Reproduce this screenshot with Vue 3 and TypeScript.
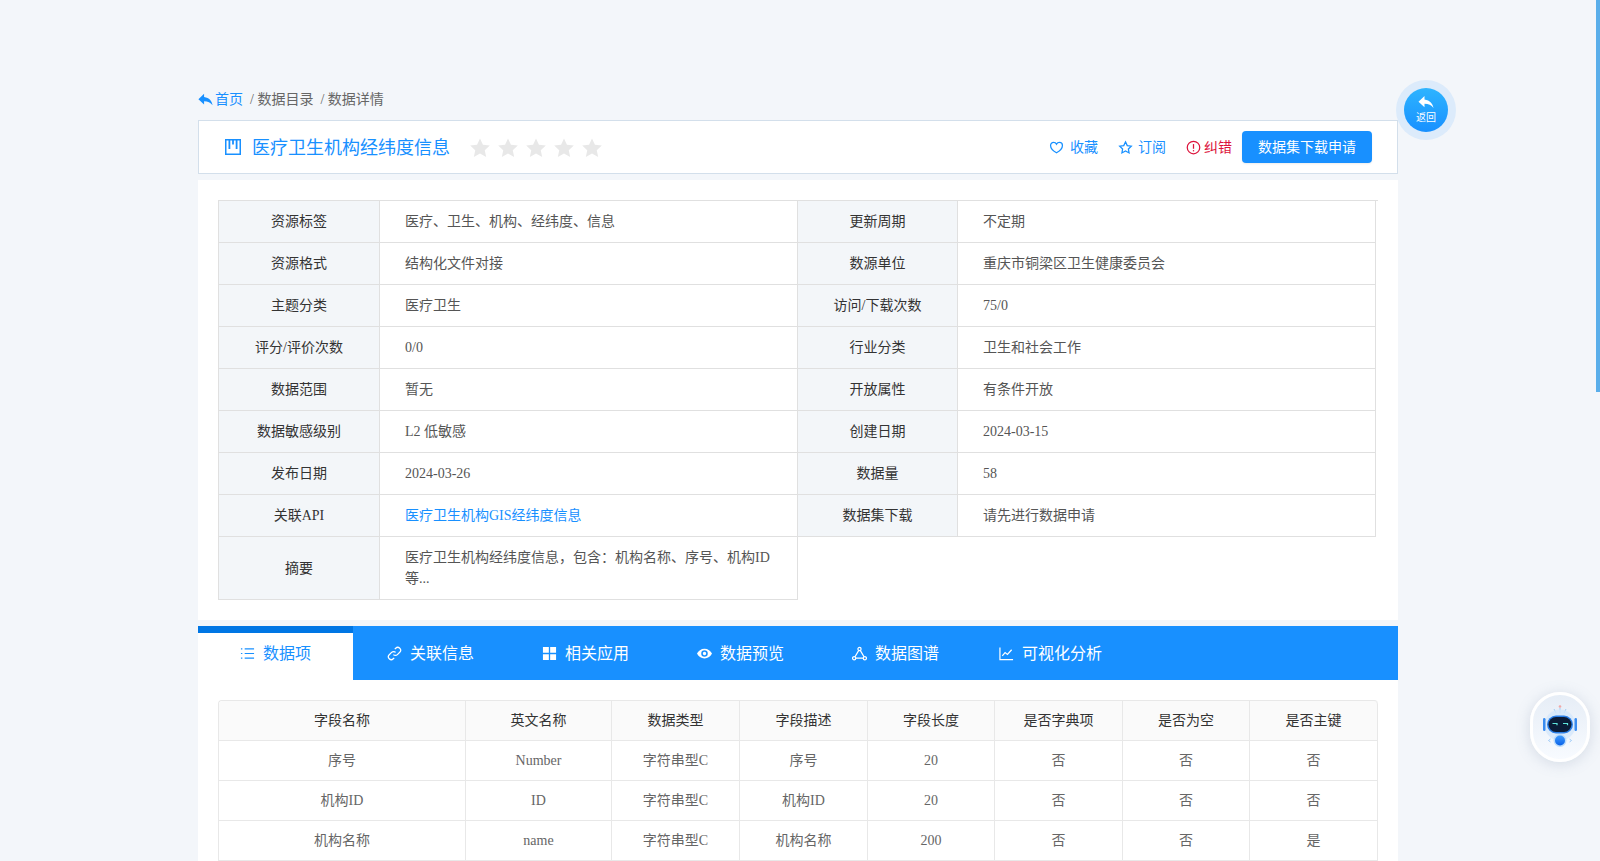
<template>
  <div class="page">
    <div class="container">
      <div class="crumbs">
        <svg class="crumb-icon" viewBox="0 0 24 24"><path d="M10 8.500V4L2 11.500 10 19v-4.600c5.400 0 9 1.700 12 5.600-1-5.600-4.500-10.500-12-11.500z" /></svg>
        <a class="crumb-home">首页</a>
        <span class="sep">/</span>
        <span>数据目录</span>
        <span class="sep">/</span>
        <span>数据详情</span>
      </div>

      <div class="head-card">
        <svg class="title-icon" viewBox="0 0 16 16">
          <rect x="0.75" y="0.75" width="14.5" height="14.5" fill="none" stroke="currentColor" stroke-width="1.500" />
          <rect x="3.500" y="1" width="1.800" height="9" fill="currentColor" />
          <rect x="10.700" y="1" width="1.800" height="9" fill="currentColor" />
          <rect x="7.100" y="1" width="1.800" height="4.500" fill="currentColor" />
        </svg>
        <span class="title">医疗卫生机构经纬度信息</span>
        <div class="stars">
          <svg v-for="n in 5" :key="n" class="star" viewBox="0 0 24 24"><path d="M12 1.500l3.200 6.900 7.500.9-5.500 5.100 1.500 7.400L12 18.100l-6.700 3.700 1.500-7.400L1.300 9.300l7.500-.9z" /></svg>
        </div>
        <div class="actions">
          <a class="act">
            <svg class="act-icon" viewBox="0 0 24 24"><path d="M12 20.500S2.500 15 2.500 8.600C2.500 5.700 4.800 3.800 7.300 3.800c1.900 0 3.700 1 4.700 2.800 1-1.800 2.800-2.800 4.700-2.800 2.500 0 4.800 1.900 4.800 4.800C21.500 15 12 20.500 12 20.500z" /></svg>
            收藏
          </a>
          <a class="act act-sub">
            <svg class="act-icon" viewBox="0 0 24 24"><path d="M12 3l2.800 5.900 6.500.9-4.700 4.500 1.100 6.400L12 17.600l-5.700 3.100 1.100-6.400-4.700-4.500 6.500-.9z" /></svg>
            订阅
          </a>
          <a class="act act-red">
            <svg class="act-icon" viewBox="0 0 24 24">
              <circle cx="12" cy="12" r="10" />
              <path d="M12 6.500v7.500" />
              <path d="M12 16.200v2" />
            </svg>
            纠错
          </a>
          <button class="apply-btn">数据集下载申请</button>
        </div>
      </div>

      <div class="info-card">
        <div class="info-grid">
          <template v-for="row in infoRows" :key="row.label">
            <div class="cell label">{{ row.label }}</div>
            <div class="cell value" :class="{ link: row.link }">{{ row.value }}</div>
          </template>
          <div class="cell label tall">摘要</div>
          <div class="cell value tall">医疗卫生机构经纬度信息，包含：机构名称、序号、机构ID等...</div>
        </div>
      </div>

      <div class="tabs">
        <div v-for="(t, i) in tabs" :key="t.name" class="tab" :class="{ active: i === 0 }">
          <svg class="tab-icon" viewBox="0 0 16 16">
            <template v-if="t.icon === 'list'">
              <path class="line" d="M5 3h10M5 8h10M5 13h10" />
              <path class="line" d="M1 3h1.500M1 8h1.500M1 13h1.500" />
            </template>
            <template v-else-if="t.icon === 'link'">
              <path class="line" d="M6.800 9.200a3 3 0 0 0 4.300 0l2.500-2.500a3 3 0 0 0-4.300-4.300L8.300 3.400" />
              <path class="line" d="M9.200 6.800a3 3 0 0 0-4.300 0L2.400 9.300a3 3 0 0 0 4.300 4.300l1-1" />
            </template>
            <template v-else-if="t.icon === 'grid'">
              <path class="solid" d="M1 1h6.300v6.300H1zM8.700 1H15v6.300H8.700zM1 8.700h6.300V15H1zM8.700 8.700H15V15H8.700z" />
            </template>
            <template v-else-if="t.icon === 'eye'">
              <path class="solid" fill-rule="evenodd" d="M8 2.800C4.400 2.800 1.400 5 0 8c1.400 3 4.400 5.200 8 5.200s6.600-2.200 8-5.200c-1.400-3-4.400-5.200-8-5.200zm0 8.700a3.500 3.500 0 1 1 0-7 3.500 3.500 0 0 1 0 7zm0-5.300a1.800 1.800 0 1 0 0 3.600 1.800 1.800 0 0 0 0-3.600z" />
            </template>
            <template v-else-if="t.icon === 'graph'">
              <circle class="line" cx="8" cy="3.200" r="1.700" />
              <circle class="line" cx="2.300" cy="13" r="1.700" />
              <circle class="line" cx="13.700" cy="13" r="1.700" />
              <path class="line" d="M7.200 4.700l-4 6.800M8.800 4.700l4 6.800M4 13h8" />
            </template>
            <template v-else>
              <path class="line" d="M1 1.500v13h14" />
              <path class="line" d="M3.500 10.500l3-3.500 2.500 2 4.500-5" />
            </template>
          </svg>
          <span>{{ t.name }}</span>
        </div>
      </div>

      <div class="fields-card">
        <div class="fields">
          <div v-for="h in fieldHeads" :key="h" class="fcell fhead">{{ h }}</div>
          <template v-for="r in fieldRows" :key="r[0]">
            <div v-for="(c, i) in r" :key="i" class="fcell">{{ c }}</div>
          </template>
        </div>
      </div>
    </div>

    <!-- floating things -->
    <div class="back-btn">
      <div class="back-inner">
        <svg class="back-icon" viewBox="0 0 24 24"><path d="M10 8.500V4L2 11.500 10 19v-4.600c5.400 0 9 1.700 12 5.600-1-5.600-4.500-10.500-12-11.500z" /></svg>
        <span>返回</span>
      </div>
    </div>

    <div class="robot">
      <svg viewBox="0 0 60 70" class="robot-svg">
        <defs>
          <linearGradient id="bodyGrad" x1="0" y1="0" x2="0" y2="1">
            <stop offset="0" stop-color="#3f9bff" />
            <stop offset="1" stop-color="#0a62e8" />
          </linearGradient>
        </defs>
        <circle cx="30" cy="14.500" r="1.300" fill="#f0a8a8" />
        <path d="M30 16v5M24 17l2 4M36 17l-2 4" stroke="#8cc0f5" stroke-width="0.800" fill="none" />
        <circle cx="30" cy="33" r="15.500" fill="#d4e7fb" opacity="0.800" />
        <rect x="13" y="26" width="2.500" height="13" rx="1.200" fill="#3a8cf0" />
        <rect x="44.500" y="26" width="2.500" height="13" rx="1.200" fill="#3a8cf0" />
        <rect x="17" y="23.500" width="26" height="18" rx="9" fill="#2a7fe8" />
        <rect x="18.500" y="25" width="23" height="15" rx="7.500" fill="#0b1c38" />
        <path d="M22.500 31.500h4.500v1.800M33 31.500h4.500v1.800" stroke="#5fe6dc" stroke-width="1.200" fill="none" />
        <circle cx="30" cy="48.500" r="6.500" fill="#bcdcfb" />
        <circle cx="30" cy="48.500" r="5" fill="url(#bodyGrad)" />
        <path d="M20.500 47l-2 1.500 2 1.500M39.500 47l2 1.500-2 1.500" stroke="#8cc0f5" stroke-width="0.800" fill="none" />
      </svg>
    </div>

    <div class="scroll-thumb"></div>
  </div>
</template>

<script setup lang="ts">
const infoRows = [
  { label: '资源标签', value: '医疗、卫生、机构、经纬度、信息' },
  { label: '更新周期', value: '不定期' },
  { label: '资源格式', value: '结构化文件对接' },
  { label: '数源单位', value: '重庆市铜梁区卫生健康委员会' },
  { label: '主题分类', value: '医疗卫生' },
  { label: '访问/下载次数', value: '75/0' },
  { label: '评分/评价次数', value: '0/0' },
  { label: '行业分类', value: '卫生和社会工作' },
  { label: '数据范围', value: '暂无' },
  { label: '开放属性', value: '有条件开放' },
  { label: '数据敏感级别', value: 'L2 低敏感' },
  { label: '创建日期', value: '2024-03-15' },
  { label: '发布日期', value: '2024-03-26' },
  { label: '数据量', value: '58' },
  { label: '关联API', value: '医疗卫生机构GIS经纬度信息', link: true },
  { label: '数据集下载', value: '请先进行数据申请' }
]

const tabs = [
  { name: '数据项', icon: 'list' },
  { name: '关联信息', icon: 'link' },
  { name: '相关应用', icon: 'grid' },
  { name: '数据预览', icon: 'eye' },
  { name: '数据图谱', icon: 'graph' },
  { name: '可视化分析', icon: 'chart' }
]

const fieldHeads = ['字段名称', '英文名称', '数据类型', '字段描述', '字段长度', '是否字典项', '是否为空', '是否主键']
const fieldRows = [
  ['序号', 'Number', '字符串型C', '序号', '20', '否', '否', '否'],
  ['机构ID', 'ID', '字符串型C', '机构ID', '20', '否', '否', '否'],
  ['机构名称', 'name', '字符串型C', '机构名称', '200', '否', '否', '是']
]
</script>

<style>
html, body { margin: 0; height: 100%; overflow: hidden; background: #f3f6fa; }
</style>

<style scoped>
.page {
  position: relative;
  height: 861px;
  overflow: hidden;
  background: #f3f6fa;
  font-family: "Liberation Serif", "Noto Sans CJK SC", serif;
  font-size: 14px;
  line-height: 21px;
  color: #666;
}

.container {
  width: 1200px;
  margin-left: 198px;
  padding-top: 88px;
}

.crumbs {
  display: flex;
  align-items: center;
  height: 22px;
  margin-bottom: 10px;
  color: #666;
}
.crumb-icon { width: 17px; height: 17px; fill: #1890ff; margin: 0 1px 0 -1px; }
.crumb-home { color: #1890ff; }
.sep { margin: 0 3.5px 0 7px; }

.head-card {
  display: flex;
  align-items: center;
  height: 54px;
  box-sizing: border-box;
  padding: 0 25px 0 26px;
  background: #fff;
  border: 1px solid #d3dfeb;
  color: #1890ff;
}
.title-icon { width: 16px; height: 16px; margin-right: 11px; }
.title { font-size: 18px; padding-top: 2px; }
.stars { display: flex; gap: 6px; margin-left: 19px; padding-top: 2px; }
.star { width: 22px; height: 22px; fill: #e8e8e8; }

.actions { display: flex; align-items: center; margin-left: auto; }
.act { display: flex; align-items: center; gap: 6px; margin-right: 20px; }
.act-icon { width: 15px; height: 15px; fill: none; stroke: currentColor; stroke-width: 2; }
.act-sub { gap: 5px; }
.act-red { color: #dc143c; gap: 3px; margin-right: 10px; }
.apply-btn {
  width: 130px;
  height: 32px;
  padding: 0;
  border: none;
  border-radius: 4px;
  background: #1890ff;
  color: #fff;
  font: inherit;
  box-shadow: 0 1px 2px rgba(0, 0, 0, 0.08);
}

.info-card {
  margin-top: 6px;
  padding: 20px;
  background: #fff;
}
.info-grid {
  display: grid;
  grid-template-columns: 161px 418px 160px 418px;
  width: 1160px;
  box-sizing: border-box;
  padding-left: 1px;
  border-top: 1px solid #e0e0e0;
}
.cell {
  display: flex;
  align-items: center;
  box-sizing: border-box;
  height: 42px;
  border-right: 1px solid #e0e0e0;
  border-bottom: 1px solid #e0e0e0;
}
.label {
  justify-content: center;
  background: #f3f6f9;
  color: #333;
}
.cell:nth-child(4n + 1) { border-left: 1px solid #e0e0e0; width: 162px; margin-left: -1px; }
.value { padding: 0 25px; color: #555; }
.link { color: #1890ff; }
.tall { height: 63px; }

.tabs {
  display: flex;
  height: 54px;
  margin-top: 6px;
  background: #1890ff;
  color: #fff;
  font-size: 16px;
}
.tab {
  display: flex;
  align-items: center;
  justify-content: center;
  gap: 8px;
  width: 155px;
}
.tab.active {
  box-sizing: border-box;
  padding-bottom: 7px;
  background: #fff;
  border-top: 7px solid #0076e4;
  color: #1890ff;
}
.tab-icon { width: 15px; height: 15px; }
.line { fill: none; stroke: currentColor; stroke-width: 1.300; }
.solid { fill: currentColor; }

.fields-card {
  padding: 20px 20px 0;
  background: #fff;
  height: 200px;
}
.fields {
  display: grid;
  grid-template-columns: 247px 146px 128px 128px 127px 128px 127px 128px;
  width: 1160px;
  box-sizing: border-box;
  border-top: 1px solid #e8e8e8;
  border-left: 1px solid #e8e8e8;
  border-radius: 4px 4px 0 0;
}
.fcell {
  display: flex;
  align-items: center;
  justify-content: center;
  box-sizing: border-box;
  height: 40px;
  border-right: 1px solid #e8e8e8;
  border-bottom: 1px solid #e8e8e8;
  color: #666;
}
.fhead { background: #fafafa; color: #333; }
.fhead:nth-child(8) { border-top-right-radius: 4px; }
.fhead:nth-child(1) { border-top-left-radius: 4px; }

.back-btn {
  position: absolute;
  left: 1396px;
  top: 80px;
  display: flex;
  align-items: center;
  justify-content: center;
  width: 60px;
  height: 60px;
  border-radius: 50%;
  background: #dcebfb;
}
.back-inner {
  display: flex;
  flex-direction: column;
  align-items: center;
  width: 44px;
  height: 44px;
  border-radius: 50%;
  background: linear-gradient(180deg, #2eb4ff, #1890ff);
  color: #fff;
  font-size: 10px;
  line-height: 12px;
}
.back-icon { width: 18px; height: 18px; margin-top: 5px; margin-bottom: 1px; fill: #fff; }

.robot {
  position: absolute;
  left: 1530px;
  top: 692px;
  width: 60px;
  height: 70px;
  box-sizing: border-box;
  border: 3px solid #fff;
  border-radius: 30px;
  background: linear-gradient(180deg, #e6edf6, #f8fbff);
  box-shadow: 0 2px 14px rgba(120, 140, 170, 0.25);
}
.robot-svg { position: absolute; left: -3px; top: -3px; width: 60px; height: 70px; }

.scroll-thumb {
  position: absolute;
  right: 0;
  top: 0;
  width: 4px;
  height: 392px;
  background: #5aaeea;
}
</style>
